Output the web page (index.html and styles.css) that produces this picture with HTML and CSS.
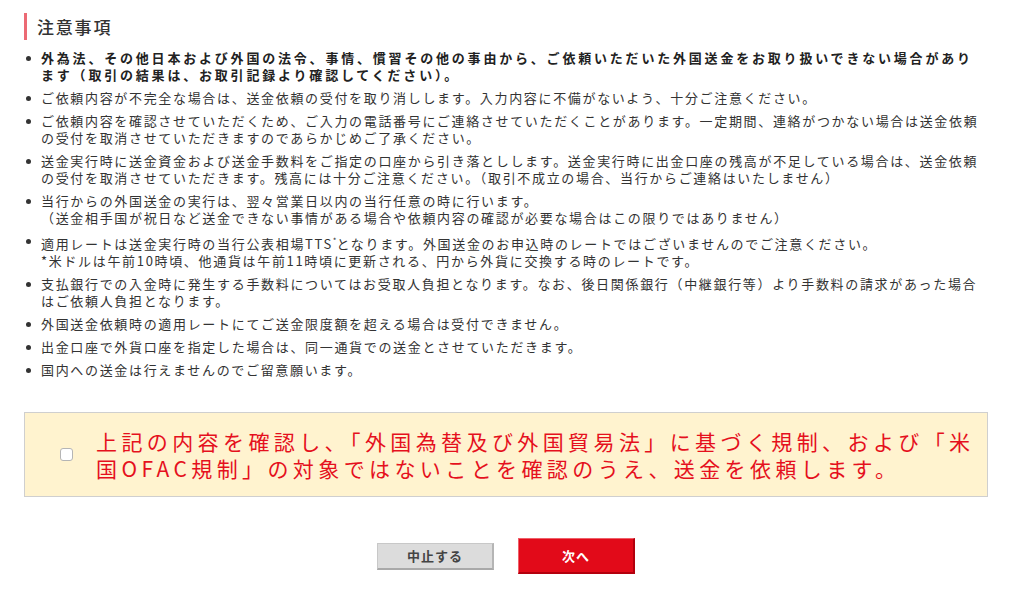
FILE: index.html
```html
<!DOCTYPE html>
<html lang="ja">
<head>
<meta charset="utf-8">
<link rel="stylesheet" href="styles.css">
</head>
<body>
<div class="page">
  <h2 class="heading">注意事項</h2>
  <ul class="notes">
    <li class="strong">外為法、その他日本および外国の法令、事情、慣習その他の事由から、ご依頼いただいた外国送金をお取り扱いできない場合があり<br>ます（取引の結果は、お取引記録より確認してください）。</li>
    <li>ご依頼内容が不完全な場合は、送金依頼の受付を取り消しします。入力内容に不備がないよう、十分ご注意ください。</li>
    <li>ご依頼内容を確認させていただくため、ご入力の電話番号にご連絡させていただくことがあります。一定期間、連絡がつかない場合は送金依頼<br>の受付を取消させていただきますのであらかじめご了承ください。</li>
    <li>送金実行時に送金資金および送金手数料をご指定の口座から引き落としします。送金実行時に出金口座の残高が不足している場合は、送金依頼<br>の受付を取消させていただきます。残高には十分ご注意ください。（取引不成立の場合、当行からご連絡はいたしません）</li>
    <li>当行からの外国送金の実行は、翌々営業日以内の当行任意の時に行います。<br>（送金相手国が祝日など送金できない事情がある場合や依頼内容の確認が必要な場合はこの限りではありません）</li>
    <li>適用レートは送金実行時の当行公表相場TTS<sup>*</sup>となります。外国送金のお申込時のレートではございませんのでご注意ください。<br>*米ドルは午前10時頃、他通貨は午前11時頃に更新される、円から外貨に交換する時のレートです。</li>
    <li>支払銀行での入金時に発生する手数料についてはお受取人負担となります。なお、後日関係銀行（中継銀行等）より手数料の請求があった場合<br>はご依頼人負担となります。</li>
    <li>外国送金依頼時の適用レートにてご送金限度額を超える場合は受付できません。</li>
    <li>出金口座で外貨口座を指定した場合は、同一通貨での送金とさせていただきます。</li>
    <li>国内への送金は行えませんのでご留意願います。</li>
  </ul>
  <label class="confirm">
    <input type="checkbox" class="check">
    <span class="confirm-text">上記の内容を確認し、「外国為替及び外国貿易法」に基づく規制、および「米<br>国OFAC規制」の対象ではないことを確認のうえ、送金を依頼します。</span>
  </label>
  <div class="actions">
    <button class="btn btn-cancel">中止する</button>
    <button class="btn btn-next">次へ</button>
  </div>
</div>
</body>
</html>
```

FILE: styles.css
```css
html, body {
  margin: 0;
  padding: 0;
  background: #fff;
}
body {
  font-family: "Noto Sans CJK JP", "Noto Sans", sans-serif;
  color: #333;
}
.page {
  width: 964px;
  padding: 13px 0 0 24px;
}
.heading {
  margin: 0;
  border-left: 3px solid #ec6a74;
  padding-left: 10px;
  font-size: 17px;
  line-height: 27px;
  font-weight: 500;
  letter-spacing: 1.8px;
  color: #333;
}
.notes {
  list-style: none;
  margin: 9px 0 0;
  padding: 0;
}
.notes li {
  position: relative;
  padding-left: 17px;
  margin-bottom: 6px;
  font-size: 13px;
  line-height: 17px;
  letter-spacing: 1.67px;
  white-space: nowrap;
  color: #333;
}
.notes li::before {
  content: "";
  position: absolute;
  left: 2px;
  top: 7px;
  width: 5px;
  height: 5px;
  border-radius: 50%;
  background: #333;
}
.notes li.strong {
  font-weight: bold;
  letter-spacing: 2.8px;
  color: #222;
}
.notes sup {
  font-size: 8px;
  letter-spacing: 0;
}
.confirm {
  display: flex;
  align-items: center;
  margin-top: 34px;
  height: 83px;
  border: 1px solid #cfcfcf;
  background: #fff3cf;
}
.check {
  appearance: none;
  -webkit-appearance: none;
  width: 13px;
  height: 13px;
  margin: 0 23px 0 35px;
  border: 1px solid #b5b5b5;
  border-radius: 3px;
  background: #fff;
  flex: none;
}
.confirm-text {
  font-size: 21px;
  line-height: 27px;
  font-weight: normal;
  letter-spacing: 4.4px;
  color: #e5101d;
  white-space: nowrap;
}
.actions {
  display: flex;
  justify-content: center;
  align-items: center;
  gap: 24px;
  margin-top: 41px;
}
.btn {
  font-family: "Noto Sans CJK JP", "Noto Sans", sans-serif;
  font-size: 13px;
  font-weight: bold;
  letter-spacing: 1px;
  cursor: pointer;
  padding: 0;
}
.btn-cancel {
  width: 117px;
  height: 27px;
  background: #dcdcdc;
  color: #444;
  border: 1px solid #c8c8c8;
  border-bottom: 2px solid #a9a9a9;
  border-right: 2px solid #b5b5b5;
}
.btn-next {
  width: 117px;
  height: 36px;
  background: #e20a19;
  color: #fff;
  border: 1px solid #ef5f69;
  border-bottom: 2px solid #b3000d;
  border-right: 2px solid #b3000d;
}
```
